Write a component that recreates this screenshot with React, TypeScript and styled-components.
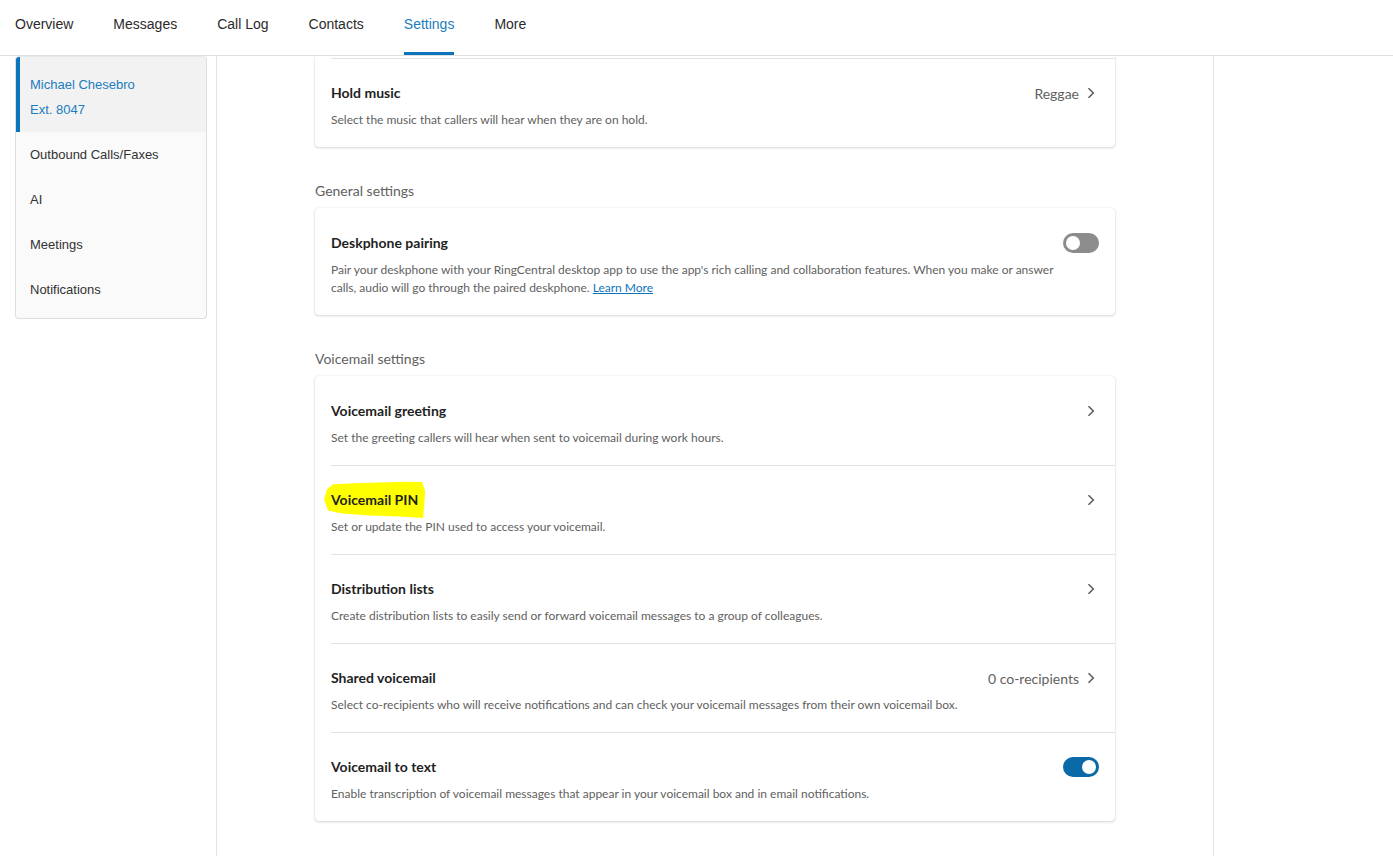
import styled, { createGlobalStyle } from "styled-components";

const GlobalStyle = createGlobalStyle`
  * { box-sizing: border-box; }
  html, body { margin: 0; padding: 0; background: #fff; }
  body { font-family: "Liberation Sans", Arial, sans-serif; overflow: hidden; }
`;

const Page = styled.div`
  width: 100%;
  height: 100vh;
  display: flex;
  flex-direction: column;
`;

const TopNav = styled.nav`
  height: 56px;
  flex-shrink: 0;
  display: flex;
  padding-left: 15px;
  border-bottom: 1px solid #e0e0e0;
`;

const Tab = styled.div<{ $active?: boolean }>`
  height: 55px;
  margin-right: 40px;
  padding-bottom: 4px;
  display: flex;
  align-items: center;
  font-size: 14px;
  color: ${({ $active }) => ($active ? "#1b7cc0" : "#2b2b2b")};
  border-bottom: 3px solid ${({ $active }) => ($active ? "#0b74bb" : "transparent")};
  cursor: pointer;
`;

const Body = styled.div`
  flex: 1;
  display: flex;
  min-height: 0;
`;

const SideColumn = styled.aside`
  width: 217px;
  flex-shrink: 0;
  padding: 0 9px 0 15px;
  border-right: 1px solid #e3e3e3;
`;

const SideMenu = styled.ul`
  list-style: none;
  margin: 0;
  padding: 0 0 6px;
  background: #fafafa;
  border: 1px solid #dedede;
  border-top-color: #e8e8e8;
  border-radius: 4px;
  overflow: hidden;
`;

const SideItem = styled.li<{ $active?: boolean }>`
  height: ${({ $active }) => ($active ? "75px" : "45px")};
  padding: ${({ $active }) => ($active ? "15px 0 0 10px" : "0 0 0 10px")};
  display: flex;
  flex-direction: column;
  justify-content: ${({ $active }) => ($active ? "flex-start" : "center")};
  font-size: 13px;
  line-height: 25px;
  color: ${({ $active }) => ($active ? "#1b7cc0" : "#333")};
  background: ${({ $active }) => ($active ? "#f2f2f2" : "transparent")};
  border-left: 4px solid ${({ $active }) => ($active ? "#0b74bb" : "transparent")};
`;

const MainColumn = styled.main`
  width: 997px;
  flex-shrink: 0;
  overflow: hidden;
  border-right: 1px solid #e3e3e3;
  display: flex;
  justify-content: center;
  font-family: Lato, "Open Sans", sans-serif;
`;

const Content = styled.div`
  width: 800px;
`;

const SectionLabel = styled.h2`
  margin: 34px 0 7px;
  font-size: 14px;
  font-weight: 400;
  line-height: 20px;
  color: #616161;
`;

const Card = styled.section<{ $clipped?: boolean }>`
  background: #fff;
  border-radius: ${({ $clipped }) => ($clipped ? "0 0 4px 4px" : "4px")};
  padding-top: ${({ $clipped }) => ($clipped ? "2px" : "0")};
  box-shadow: 0 0 1px rgba(0, 0, 0, 0.18), 0 1px 3px rgba(0, 0, 0, 0.16);
`;

const Row = styled.div`
  padding-left: 16px;
`;

const RowInner = styled.div<{ $divided?: boolean }>`
  padding: 24px 16px 18px 0;
  border-top: 1px solid ${({ $divided }) => ($divided ? "#e3e3e3" : "transparent")};
`;

const RowHead = styled.div`
  height: 20px;
  display: flex;
  align-items: center;
  justify-content: space-between;
`;

const Title = styled.span<{ $marked?: boolean }>`
  position: relative;
  z-index: 0;
  font-size: 14px;
  font-weight: 700;
  line-height: 20px;
  color: #1f1f1f;
  &::before {
    content: "";
    display: ${({ $marked }) => ($marked ? "block" : "none")};
    position: absolute;
    left: -7px;
    right: -7px;
    top: -9px;
    bottom: -8px;
    z-index: -1;
    background: #ffff00;
    clip-path: polygon(
      3% 22%, 9% 9%, 30% 6%, 55% 4%, 80% 2%, 97% 3%, 100% 28%, 99% 65%,
      98% 100%, 75% 96%, 45% 93%, 18% 88%, 4% 80%, 0% 50%
    );
  }
`;

const Desc = styled.p`
  margin: 8px 0 0;
  max-width: 730px;
  font-size: 12px;
  line-height: 18px;
  color: #616161;
`;

const Link = styled.a`
  color: #0b74bb;
  text-decoration: underline;
`;

const Trail = styled.div`
  display: flex;
  align-items: center;
  gap: 8px;
  font-size: 14px;
  color: #616161;
`;

const Chevron = styled.svg`
  width: 8px;
  height: 12px;
  margin-right: 4px;
`;

const Toggle = styled.div<{ $on?: boolean }>`
  position: relative;
  width: 36px;
  height: 20px;
  border-radius: 10px;
  background: ${({ $on }) => ($on ? "#0a6aa8" : "#8c8c8c")};
  &::after {
    content: "";
    position: absolute;
    top: 3px;
    left: ${({ $on }) => ($on ? "19px" : "3px")};
    width: 14px;
    height: 14px;
    border-radius: 50%;
    background: #fff;
  }
`;

const RightColumn = styled.div`
  flex: 1;
`;

const Arrow = () => (
  <Chevron viewBox="0 0 8 12" fill="none">
    <path d="M1.5 1.2 L6.3 6 L1.5 10.8" stroke="#5f5f5f" strokeWidth="1.6" />
  </Chevron>
);

type Setting = {
  title: string;
  desc: React.ReactNode;
  value?: string;
  toggle?: boolean;
  marked?: boolean;
};

const SettingRow = ({ s, divided }: { s: Setting; divided?: boolean }) => (
  <Row>
    <RowInner $divided={divided}>
      <RowHead>
        <Title $marked={s.marked}>{s.title}</Title>
        {s.toggle === undefined ? (
          <Trail>
            {s.value && <span>{s.value}</span>}
            <Arrow />
          </Trail>
        ) : (
          <Toggle $on={s.toggle} />
        )}
      </RowHead>
      <Desc>{s.desc}</Desc>
    </RowInner>
  </Row>
);

const voicemail: Setting[] = [
  {
    title: "Voicemail greeting",
    desc: "Set the greeting callers will hear when sent to voicemail during work hours.",
  },
  {
    title: "Voicemail PIN",
    desc: "Set or update the PIN used to access your voicemail.",
    marked: true,
  },
  {
    title: "Distribution lists",
    desc: "Create distribution lists to easily send or forward voicemail messages to a group of colleagues.",
  },
  {
    title: "Shared voicemail",
    desc: "Select co-recipients who will receive notifications and can check your voicemail messages from their own voicemail box.",
    value: "0 co-recipients",
  },
  {
    title: "Voicemail to text",
    desc: "Enable transcription of voicemail messages that appear in your voicemail box and in email notifications.",
    toggle: true,
  },
];

const tabs = ["Overview", "Messages", "Call Log", "Contacts", "Settings", "More"];
const menu = ["Outbound Calls/Faxes", "AI", "Meetings", "Notifications"];

export default function App() {
  return (
    <Page>
      <GlobalStyle />
      <TopNav>
        {tabs.map((t) => (
          <Tab key={t} $active={t === "Settings"}>
            {t}
          </Tab>
        ))}
      </TopNav>
      <Body>
        <SideColumn>
          <SideMenu>
            <SideItem $active>
              <span>Michael Chesebro</span>
              <span>Ext. 8047</span>
            </SideItem>
            {menu.map((m) => (
              <SideItem key={m}>{m}</SideItem>
            ))}
          </SideMenu>
        </SideColumn>
        <MainColumn>
          <Content>
            <Card $clipped>
              <SettingRow
                divided
                s={{
                  title: "Hold music",
                  desc: "Select the music that callers will hear when they are on hold.",
                  value: "Reggae",
                }}
              />
            </Card>

            <SectionLabel>General settings</SectionLabel>
            <Card>
              <SettingRow
                s={{
                  title: "Deskphone pairing",
                  toggle: false,
                  desc: (
                    <>
                      Pair your deskphone with your RingCentral desktop app to use the app's rich calling and
                      collaboration features. When you make or answer calls, audio will go through the paired
                      deskphone. <Link>Learn More</Link>
                    </>
                  ),
                }}
              />
            </Card>

            <SectionLabel>Voicemail settings</SectionLabel>
            <Card>
              {voicemail.map((s, i) => (
                <SettingRow key={s.title} s={s} divided={i > 0} />
              ))}
            </Card>
          </Content>
        </MainColumn>
        <RightColumn />
      </Body>
    </Page>
  );
}
